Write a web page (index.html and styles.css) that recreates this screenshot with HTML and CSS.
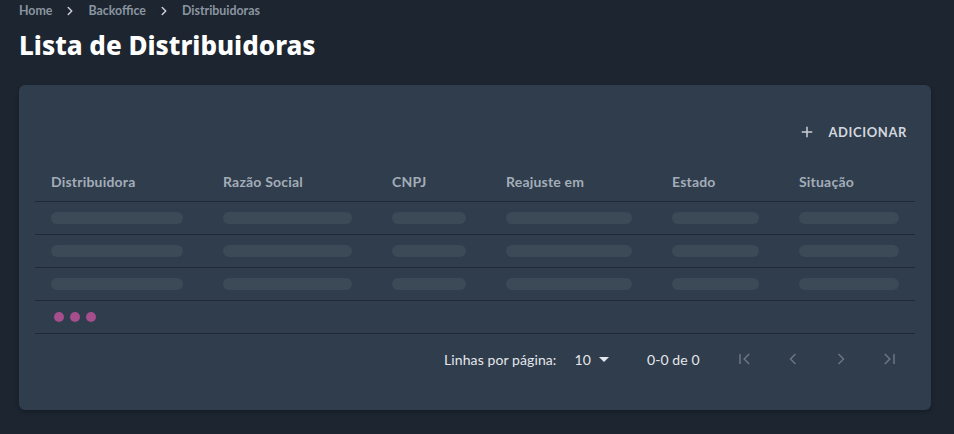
FILE: index.html
```html
<!DOCTYPE html>
<html lang="pt">
<head>
<meta charset="utf-8">
<link rel="stylesheet" href="styles.css">
</head>
<body>
<div class="page">
  <nav class="crumbs">
    <span>Home</span>
    <svg class="sep" viewBox="0 0 24 24" width="14" height="14"><path d="M9 6l6 6-6 6" fill="none" stroke="currentColor" stroke-width="2.6" stroke-linecap="round" stroke-linejoin="round"/></svg>
    <span>Backoffice</span>
    <svg class="sep" viewBox="0 0 24 24" width="14" height="14"><path d="M9 6l6 6-6 6" fill="none" stroke="currentColor" stroke-width="2.6" stroke-linecap="round" stroke-linejoin="round"/></svg>
    <span>Distribuidoras</span>
  </nav>
  <h1 class="title">Lista de Distribuidoras</h1>
  <section class="card">
    <div class="toolbar">
      <button class="add">
        <svg viewBox="0 0 24 24" width="18" height="18"><path d="M12 5v14M5 12h14" fill="none" stroke="currentColor" stroke-width="2"/></svg>
        <span>ADICIONAR</span>
      </button>
    </div>
    <div class="table">
      <div class="row head">
        <div class="c c1">Distribuidora</div>
        <div class="c c2">Razão Social</div>
        <div class="c c3">CNPJ</div>
        <div class="c c4">Reajuste em</div>
        <div class="c c5">Estado</div>
        <div class="c c6">Situação</div>
      </div>
      <div class="row sk">
        <div class="c c1"><i class="bar w1"></i></div>
        <div class="c c2"><i class="bar w2"></i></div>
        <div class="c c3"><i class="bar w3"></i></div>
        <div class="c c4"><i class="bar w4"></i></div>
        <div class="c c5"><i class="bar w5"></i></div>
        <div class="c c6"><i class="bar w6"></i></div>
      </div>
      <div class="row sk">
        <div class="c c1"><i class="bar w1"></i></div>
        <div class="c c2"><i class="bar w2"></i></div>
        <div class="c c3"><i class="bar w3"></i></div>
        <div class="c c4"><i class="bar w4"></i></div>
        <div class="c c5"><i class="bar w5"></i></div>
        <div class="c c6"><i class="bar w6"></i></div>
      </div>
      <div class="row sk">
        <div class="c c1"><i class="bar w1"></i></div>
        <div class="c c2"><i class="bar w2"></i></div>
        <div class="c c3"><i class="bar w3"></i></div>
        <div class="c c4"><i class="bar w4"></i></div>
        <div class="c c5"><i class="bar w5"></i></div>
        <div class="c c6"><i class="bar w6"></i></div>
      </div>
      <div class="row dots">
        <i class="dot"></i><i class="dot"></i><i class="dot"></i>
      </div>
    </div>
    <div class="pager">
      <span class="lbl">Linhas por página:</span>
      <span class="sel">10 <svg viewBox="0 0 10 5" width="10" height="5"><path d="M0 0h10L5 5z" fill="currentColor"/></svg></span>
      <span class="count">0-0 de 0</span>
      <span class="nav">
        <svg viewBox="0 0 24 24" width="20" height="20"><path d="M6 6v12M17 6l-6 6 6 6" fill="none" stroke="currentColor" stroke-width="1.8"/></svg>
        <svg viewBox="0 0 24 24" width="20" height="20"><path d="M15 6l-6 6 6 6" fill="none" stroke="currentColor" stroke-width="1.8"/></svg>
        <svg viewBox="0 0 24 24" width="20" height="20"><path d="M9 6l6 6-6 6" fill="none" stroke="currentColor" stroke-width="1.8"/></svg>
        <svg viewBox="0 0 24 24" width="20" height="20"><path d="M7 6l6 6-6 6M18 6v12" fill="none" stroke="currentColor" stroke-width="1.8"/></svg>
      </span>
    </div>
  </section>
</div>
</body>
</html>
```
FILE: styles.css
```css
* { box-sizing: border-box; }
html, body { margin: 0; padding: 0; }
body {
  background: #1c2530;
  font-family: Lato, "Noto Sans", sans-serif;
  color: #fff;
  width: 954px;
  height: 434px;
  overflow: hidden;
}
.page { padding: 0 23px 0 19px; }
.crumbs {
  display: flex;
  align-items: center;
  height: 21px;
  font-size: 12.4px;
  font-weight: 700;
  color: #8b95a1;
  gap: 6px;
}
.crumbs .sep { color: #c9ced4; margin: 0 5px; }
.title {
  margin: 8px 0 0;
  font-family: "Noto Sans", Lato, sans-serif;
  font-size: 26px;
  line-height: 32px;
  font-weight: 800;
  color: #fff;
}
.card {
  margin-top: 24px;
  background: #303d4d;
  border-radius: 6px;
  box-shadow: 0 2px 4px rgba(0,0,0,0.25);
  padding: 0 16px 26px;
}
.toolbar {
  display: flex;
  justify-content: flex-end;
  padding-top: 29px;
  height: 66px;
}
.add {
  display: flex;
  align-items: center;
  gap: 12px;
  background: none;
  border: 0;
  padding: 0 8px 0 0;
  height: 36px;
  color: #d3d8de;
  font: 700 13px Lato, sans-serif;
  letter-spacing: 0.6px;
}
.add svg { color: #c9ced4; }
.table { width: 880px; }
.row {
  display: flex;
  border-bottom: 1px solid #1f2935;
}
.c { padding-left: 16px; }
.c1 { width: 172px; }
.c2 { width: 169px; }
.c3 { width: 114px; }
.c4 { width: 166px; }
.c5 { width: 127px; }
.c6 { width: 132px; }
.head { height: 51px; padding-top: 21px; }
.head .c {
  font-size: 14px;
  font-weight: 700;
  color: #a3adb8;
  line-height: 20px;
  letter-spacing: 0.2px;
}
.sk { height: 33px; align-items: center; }
.bar {
  display: block;
  height: 12px;
  border-radius: 6px;
  background: #3c4a57;
}
.w1 { width: 132px; }
.w2 { width: 129px; }
.w3 { width: 74px; }
.w4 { width: 126px; }
.w5 { width: 87px; }
.w6 { width: 100px; }
.dots {
  height: 33px;
  align-items: center;
  padding-left: 19px;
  gap: 6px;
}
.dot {
  width: 10px;
  height: 10px;
  border-radius: 50%;
  background: #a54e8b;
}
.pager {
  display: flex;
  align-items: center;
  height: 50px;
  padding-left: 409px;
  font-size: 14px;
  color: #e4e7eb;
  letter-spacing: 0.1px;
}
.sel {
  display: flex;
  align-items: center;
  gap: 8px;
  margin-left: 18px;
}
.count { margin-left: 38px; }
.nav {
  display: flex;
  gap: 28px;
  margin-left: 35px;
  color: #6b7682;
}
```
